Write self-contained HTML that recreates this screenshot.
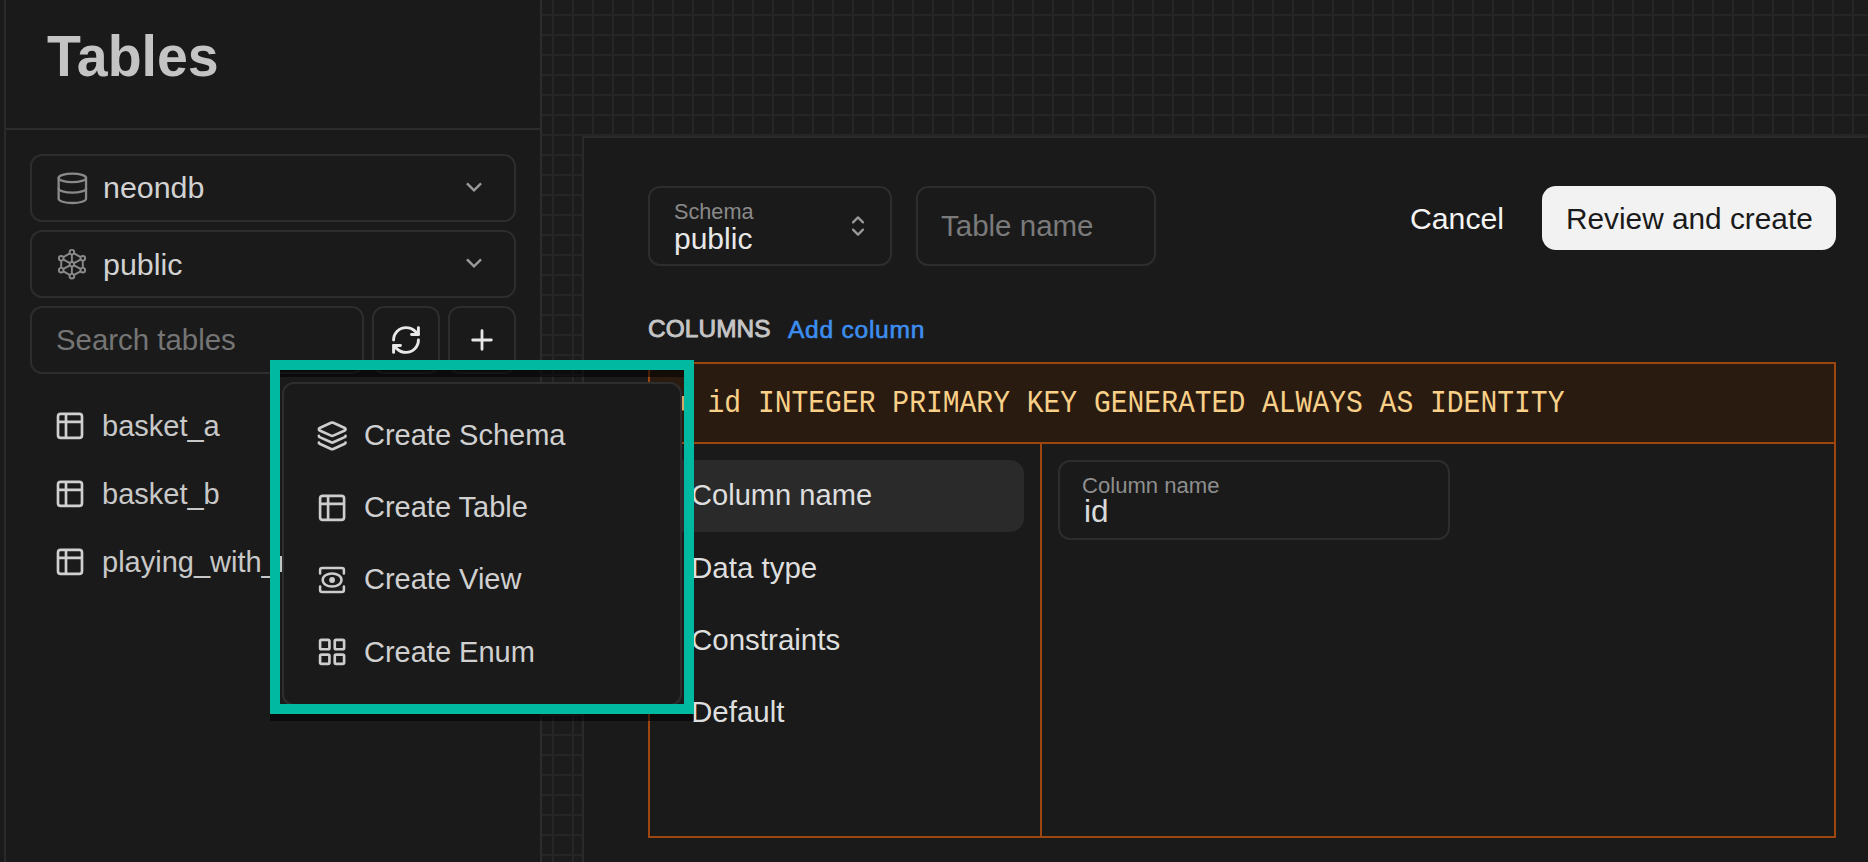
<!DOCTYPE html>
<html><head><meta charset="utf-8">
<style>
*{margin:0;padding:0;box-sizing:border-box}
html,body{width:1868px;height:862px;overflow:hidden;background:#1a1a1a;font-family:"Liberation Sans",sans-serif}
.a{position:absolute}
.t{position:absolute;white-space:nowrap;line-height:1}
.box{position:absolute;border:2px solid #2d2d2d;border-radius:12px}
svg.i{position:absolute;overflow:visible}
</style></head><body>

<!-- grid background region -->
<div class="a" id="grid" style="left:542px;top:0;width:1326px;height:862px;background-color:#1c1c1c;
background-image:linear-gradient(to right,#262626 0,#262626 2px,transparent 2px),linear-gradient(to bottom,#262626 0,#262626 2px,transparent 2px);
background-size:20px 20px;background-position:10px 14px"></div>

<!-- sidebar -->
<div class="a" style="left:0;top:0;width:542px;height:862px;background:#1a1a1a"></div>
<div class="a" style="left:4px;top:0;width:2px;height:862px;background:#2a2a2a"></div>
<div class="a" style="left:540px;top:0;width:2px;height:862px;background:#2c2c2c"></div>
<div class="a" style="left:6px;top:128px;width:534px;height:2px;background:#2c2c2c"></div>

<!-- main panel -->
<div class="a" style="left:582px;top:136px;width:1286px;height:726px;background:#1a1a1a;border-left:2px solid #2a2a2a;border-top:2px solid #2a2a2a"></div>

<div class="t" style="left:47px;top:30px;font-size:55.5px;font-weight:bold;color:#c4c4c4;transform:scaleY(1.035);transform-origin:0 47px">Tables</div>

<!-- selects -->
<div class="box" style="left:30px;top:154px;width:486px;height:68px"></div>
<div class="box" style="left:30px;top:230px;width:486px;height:68px"></div>
<div class="box" style="left:30px;top:306px;width:334px;height:68px"></div>
<div class="box" style="left:372px;top:306px;width:68px;height:68px"></div>
<div class="box" style="left:448px;top:306px;width:68px;height:68px"></div>

<div class="t" style="left:103px;top:172px;font-size:30.4px;color:#d2d2d2">neondb</div>
<div class="t" style="left:103px;top:248.5px;font-size:30.4px;color:#d2d2d2">public</div>
<div class="t" style="left:56px;top:325px;font-size:29.4px;color:#757575">Search tables</div>

<div class="t" style="left:102px;top:411.5px;font-size:29px;color:#c8c8c8">basket_a</div>
<div class="t" style="left:102px;top:479.5px;font-size:29px;color:#c8c8c8">basket_b</div>
<div class="t" style="left:102px;top:547.5px;font-size:29px;color:#c8c8c8">playing_with_neon</div>

<!-- main header -->
<div class="box" style="left:648px;top:186px;width:244px;height:80px"></div>
<div class="box" style="left:916px;top:186px;width:240px;height:80px"></div>
<div class="t" style="left:674px;top:201px;font-size:21.7px;color:#8a8a8a">Schema</div>
<div class="t" style="left:674px;top:223.5px;font-size:30px;color:#e8e8e8">public</div>
<div class="t" style="left:941px;top:211px;font-size:29.5px;color:#7a7a7a">Table name</div>

<div class="t" style="left:1410px;top:204px;font-size:30.2px;color:#f4f4f4">Cancel</div>
<div class="a" style="left:1542px;top:186px;width:294px;height:64px;background:#f2f2f2;border-radius:14px"></div>
<div class="t" style="left:1566px;top:204px;font-size:29.8px;color:#1a1a1a">Review and create</div>

<div class="t" style="left:648px;top:317px;font-size:24.4px;color:#c6c6c6;-webkit-text-stroke:0.9px #c6c6c6;letter-spacing:0.1px">COLUMNS</div>
<div class="t" style="left:788px;top:318px;font-size:24.6px;color:#3d8ef0;-webkit-text-stroke:0.6px #3d8ef0;letter-spacing:0.72px">Add column</div>

<!-- columns box -->
<div class="a" style="left:648px;top:362px;width:1188px;height:476px;border:2px solid #9e4610"></div>
<div class="a" style="left:650px;top:364px;width:1184px;height:78px;background:#2a1b11"></div>
<div class="a" style="left:650px;top:442px;width:1184px;height:2px;background:#9e4610"></div>
<div class="a" style="left:1040px;top:444px;width:2px;height:392px;background:#9e4610"></div>
<div class="t" style="left:707.5px;top:391px;font-family:'Liberation Mono',monospace;font-size:28px;color:#f9d088;transform:scaleY(1.14);transform-origin:0 21px">id INTEGER PRIMARY KEY GENERATED ALWAYS AS IDENTITY</div>

<div class="a" style="left:660px;top:460px;width:364px;height:72px;background:#2a2a2a;border-radius:14px"></div>
<div class="t" style="left:691px;top:481px;font-size:29.1px;color:#dedede">Column name</div>
<div class="t" style="left:691px;top:553px;font-size:29.5px;color:#dedede">Data type</div>
<div class="t" style="left:691px;top:625px;font-size:29.5px;color:#dedede">Constraints</div>
<div class="t" style="left:691px;top:697px;font-size:29.5px;color:#dedede">Default</div>

<div class="box" style="left:1058px;top:460px;width:392px;height:80px"></div>
<div class="t" style="left:1082px;top:475px;font-size:22.1px;color:#8e8e8e">Column name</div>
<div class="t" style="left:1084px;top:496px;font-size:31.5px;color:#dadada">id</div>

<!-- menu -->
<div class="a" style="left:282px;top:382px;width:400px;height:324px;background:#1a1a1a;border:2px solid #2e2e2e;border-radius:12px"></div>
<div class="a" style="left:270px;top:366.5px;width:424px;height:354px;border:10px solid rgba(0,0,0,.55)"></div>
<div class="a" style="left:270px;top:360px;width:424px;height:354px;border:10px solid #00b9a0"></div>
<div class="t" style="left:364px;top:421px;font-size:29px;color:#d0d0d0">Create Schema</div>
<div class="t" style="left:364px;top:493px;font-size:29px;color:#d0d0d0">Create Table</div>
<div class="t" style="left:364px;top:565px;font-size:29px;color:#d0d0d0">Create View</div>
<div class="t" style="left:364px;top:638px;font-size:29px;color:#d0d0d0">Create Enum</div>

<svg class="a" width="1868" height="862" viewBox="0 0 1868 862" style="left:0;top:0;pointer-events:none" fill="none" stroke-linecap="round" stroke-linejoin="round">
<!-- database -->
<g stroke="#8a8a8a" stroke-width="2.3">
<ellipse cx="72.35" cy="177.9" rx="13.7" ry="4.2"/>
<path d="M58.65 177.9V198.8A13.7 4.2 0 0 0 86.05 198.8V177.9"/>
<path d="M58.65 188.4A13.7 4.2 0 0 0 86.05 188.4"/>
</g>
<!-- public hex -->
<g stroke="#8a8a8a" stroke-width="1.9">
<path d="M71.9 252.2L82.8 258.3L82.8 270.2L71.9 276.2L61.2 270.2L61.2 258.3Z"/>
<path d="M71.9 252.2V276.2M61.2 258.3L82.8 270.2M82.8 258.3L61.2 270.2"/>
</g>
<g stroke="#8a8a8a" stroke-width="1.9" fill="#1a1a1a">
<circle cx="71.9" cy="252.2" r="2.3"/><circle cx="82.8" cy="258.3" r="2.3"/><circle cx="82.8" cy="270.2" r="2.3"/>
<circle cx="71.9" cy="276.2" r="2.3"/><circle cx="61.2" cy="270.2" r="2.3"/><circle cx="61.2" cy="258.3" r="2.3"/>
<circle cx="71.9" cy="264.2" r="2.2"/>
</g>
<!-- chevrons -->
<g stroke="#9a9a9a" stroke-width="2.4" stroke-linecap="square" stroke-linejoin="miter">
<path d="M467.8 184.2L474 190.4L480.2 184.2"/>
<path d="M467.8 260.2L474 266.4L480.2 260.2"/>
</g>
<g stroke="#9a9a9a" stroke-width="2.2">
<path d="M853 222.4L858 217.4L863 222.4"/>
<path d="M853 229.6L858 234.6L863 229.6"/>
</g>
<!-- refresh (lucide refresh-cw) -->
<g transform="translate(389.44 323.44) scale(1.38)" stroke="#e8e8e8" stroke-width="2.1">
<path d="M3 12a9 9 0 0 1 9-9 9.75 9.75 0 0 1 6.74 2.74L21 8"/>
<path d="M21 3v5h-5"/>
<path d="M21 12a9 9 0 0 1-9 9 9.75 9.75 0 0 1-6.74-2.74L3 16"/>
<path d="M8 16H3v5"/>
</g>
<!-- plus -->
<path d="M472.7 340H491.3M482 330.7V349.3" stroke="#e8e8e8" stroke-width="2.8"/>
<!-- table icons sidebar (lucide table-2) -->
<g stroke="#d0d0d0" stroke-width="2">
<g transform="translate(54 409.9) scale(1.333)"><path d="M9 3H5a2 2 0 0 0-2 2v4m6-6h10a2 2 0 0 1 2 2v4M9 3v18m0 0h10a2 2 0 0 0 2-2V9M9 21H5a2 2 0 0 1-2-2V9m0 0h18"/></g>
<g transform="translate(54 477.9) scale(1.333)"><path d="M9 3H5a2 2 0 0 0-2 2v4m6-6h10a2 2 0 0 1 2 2v4M9 3v18m0 0h10a2 2 0 0 0 2-2V9M9 21H5a2 2 0 0 1-2-2V9m0 0h18"/></g>
<g transform="translate(54 545.9) scale(1.333)"><path d="M9 3H5a2 2 0 0 0-2 2v4m6-6h10a2 2 0 0 1 2 2v4M9 3v18m0 0h10a2 2 0 0 0 2-2V9M9 21H5a2 2 0 0 1-2-2V9m0 0h18"/></g>
</g>
<!-- menu icons -->
<g stroke="#cdcdcd" stroke-width="2">
<g transform="translate(316.2 419.9) scale(1.333)">
<path d="M12.83 2.18a2 2 0 0 0-1.66 0L2.6 6.08a1 1 0 0 0 0 1.83l8.58 3.91a2 2 0 0 0 1.66 0l8.58-3.9a1 1 0 0 0 0-1.83Z"/>
<path d="M2 12a1 1 0 0 0 .58.91l8.6 3.91a2 2 0 0 0 1.65 0l8.58-3.9A1 1 0 0 0 22 12"/>
<path d="M2 17a1 1 0 0 0 .58.91l8.6 3.91a2 2 0 0 0 1.65 0l8.58-3.9A1 1 0 0 0 22 17"/>
</g>
<g transform="translate(316.1 491.9) scale(1.333)"><path d="M9 3H5a2 2 0 0 0-2 2v4m6-6h10a2 2 0 0 1 2 2v4M9 3v18m0 0h10a2 2 0 0 0 2-2V9M9 21H5a2 2 0 0 1-2-2V9m0 0h18"/></g>
<g transform="translate(316.1 635.9) scale(1.333)">
<rect width="7" height="7" x="3" y="3" rx="1"/><rect width="7" height="7" x="14" y="3" rx="1"/><rect width="7" height="7" x="14" y="14" rx="1"/><rect width="7" height="7" x="3" y="14" rx="1"/>
</g>
</g>
<g stroke="#cdcdcd" stroke-width="2.5">
<path d="M320.1 573.5V570A2 2 0 0 1 322.1 568H341.9A2 2 0 0 1 343.9 570V573.5"/>
<path d="M320.1 586.5V590A2 2 0 0 0 322.1 592H341.9A2 2 0 0 0 343.9 590V586.5"/>
<ellipse cx="332.1" cy="580" rx="9.4" ry="6.6"/>
</g>
<circle cx="332.1" cy="580" r="2.9" fill="#cdcdcd"/>
<rect x="682" y="396" width="2" height="14.5" fill="#d8a868"/>
</svg>
</body></html>
